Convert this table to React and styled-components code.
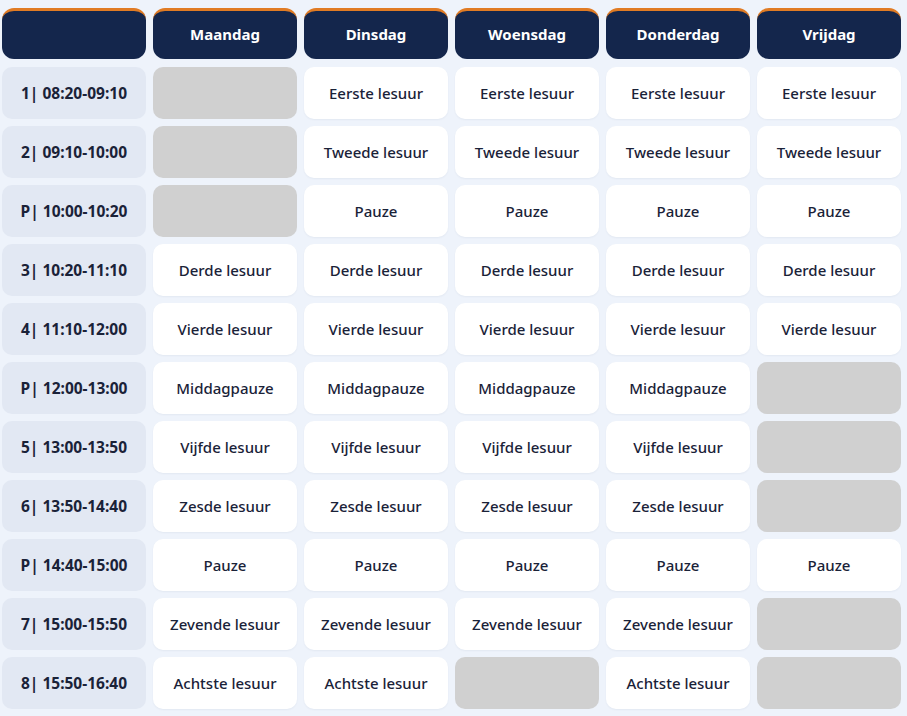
import React from "react";
import styled, { createGlobalStyle } from "styled-components";

const Global = createGlobalStyle`
  html, body { margin: 0; padding: 0; background: #eef3fb; }
  body { font-family: "Noto Sans", "Open Sans", sans-serif; }
`;

const Grid = styled.div`
  display: grid;
  grid-template-columns: repeat(6, 144px);
  grid-auto-rows: 52px;
  column-gap: 7px;
  row-gap: 7px;
  padding: 8px 6px 6px 2px;
`;

const Header = styled.div`
  height: 51px;
  box-sizing: border-box;
  background: #14264c;
  border-top: 3px solid #e07b24;
  border-radius: 12px;
  color: #fff;
  font-weight: 700;
  font-size: 15px;
  display: flex;
  align-items: center;
  justify-content: center;
  padding-bottom: 3px;
  margin-bottom: 1px;
`;

const Label = styled.div`
  background: #e2e8f3;
  border-radius: 10px;
  color: #1a2238;
  font-weight: 700;
  font-size: 15.5px;
  display: flex;
  align-items: center;
  justify-content: center;
  padding-bottom: 1px;
`;

const Cell = styled.div`
  background: ${(p) => (p.$empty ? "#d0d0d0" : "#ffffff")};
  border-radius: 10px;
  color: #1a2238;
  font-weight: 500;
  font-size: 15px;
  display: flex;
  align-items: center;
  justify-content: center;
  padding-bottom: 1px;
  box-shadow: ${(p) => (p.$empty ? "none" : "0 1px 2px rgba(20,38,76,0.05)")};
`;

const days = ["Maandag", "Dinsdag", "Woensdag", "Donderdag", "Vrijdag"];

const rows = [
  ["1| 08:20-09:10", [null, "Eerste lesuur", "Eerste lesuur", "Eerste lesuur", "Eerste lesuur"]],
  ["2| 09:10-10:00", [null, "Tweede lesuur", "Tweede lesuur", "Tweede lesuur", "Tweede lesuur"]],
  ["P| 10:00-10:20", [null, "Pauze", "Pauze", "Pauze", "Pauze"]],
  ["3| 10:20-11:10", ["Derde lesuur", "Derde lesuur", "Derde lesuur", "Derde lesuur", "Derde lesuur"]],
  ["4| 11:10-12:00", ["Vierde lesuur", "Vierde lesuur", "Vierde lesuur", "Vierde lesuur", "Vierde lesuur"]],
  ["P| 12:00-13:00", ["Middagpauze", "Middagpauze", "Middagpauze", "Middagpauze", null]],
  ["5| 13:00-13:50", ["Vijfde lesuur", "Vijfde lesuur", "Vijfde lesuur", "Vijfde lesuur", null]],
  ["6| 13:50-14:40", ["Zesde lesuur", "Zesde lesuur", "Zesde lesuur", "Zesde lesuur", null]],
  ["P| 14:40-15:00", ["Pauze", "Pauze", "Pauze", "Pauze", "Pauze"]],
  ["7| 15:00-15:50", ["Zevende lesuur", "Zevende lesuur", "Zevende lesuur", "Zevende lesuur", null]],
  ["8| 15:50-16:40", ["Achtste lesuur", "Achtste lesuur", null, "Achtste lesuur", null]],
];

export default function App() {
  return (
    <>
      <Global />
      <Grid>
        <Header />
        {days.map((d) => (
          <Header key={d}>{d}</Header>
        ))}
        {rows.map(([label, cells]) => (
          <React.Fragment key={label}>
            <Label>{label}</Label>
            {cells.map((c, i) => (
              <Cell key={i} $empty={!c}>
                {c}
              </Cell>
            ))}
          </React.Fragment>
        ))}
      </Grid>
    </>
  );
}
